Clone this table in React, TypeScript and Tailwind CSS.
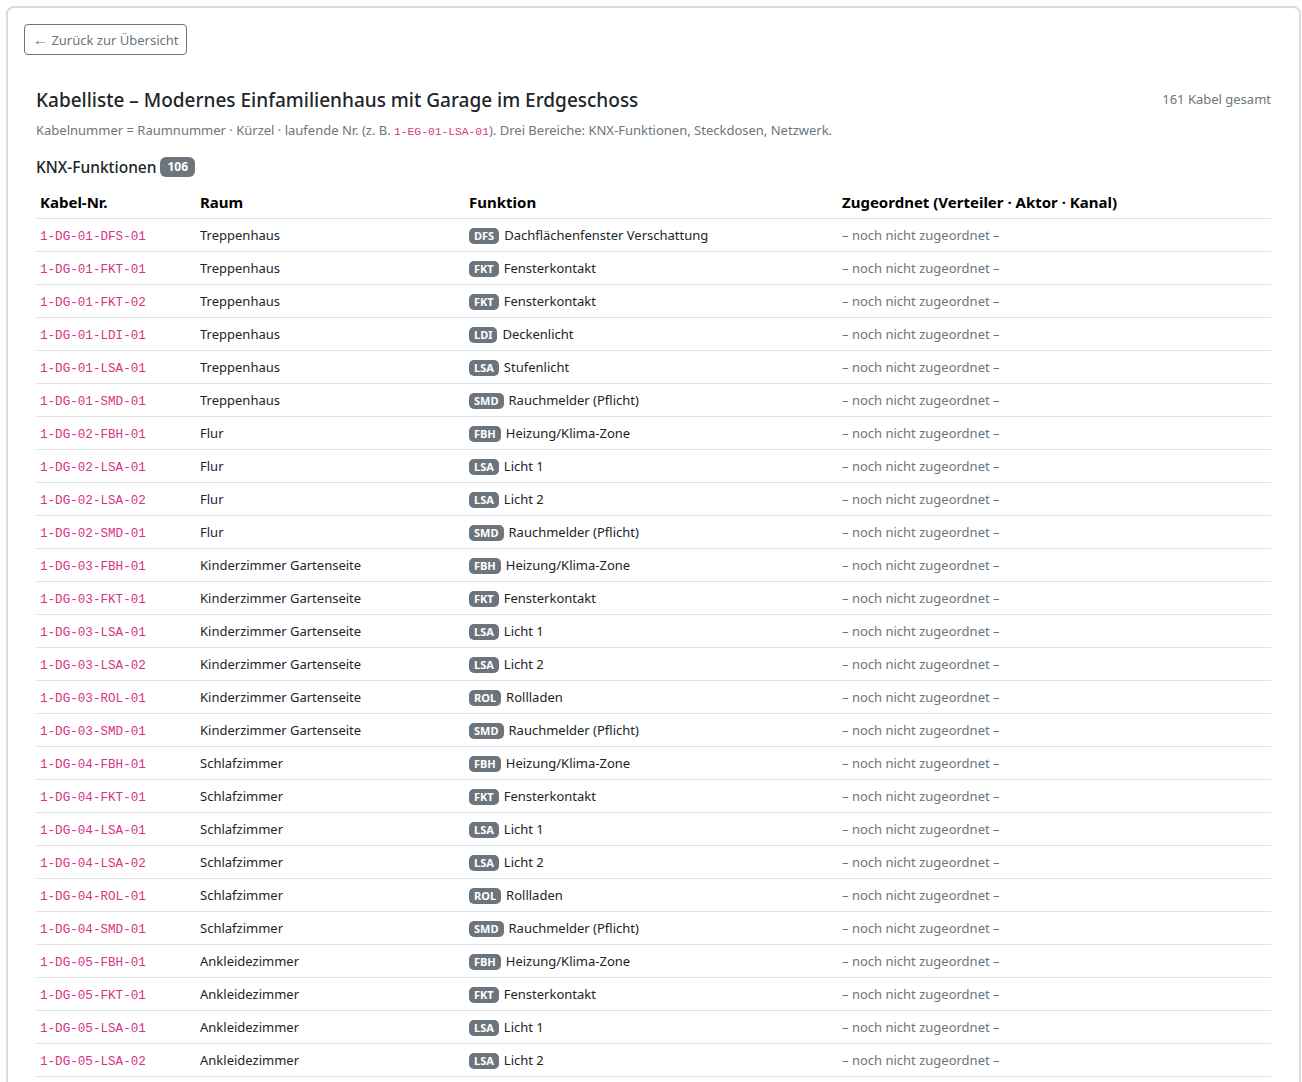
import React from "react";

type Row = { nr: string; raum: string; code: string; funktion: string };

const rows: Row[] = [
  { nr: "1-DG-01-DFS-01", raum: "Treppenhaus", code: "DFS", funktion: "Dachflächenfenster Verschattung" },
  { nr: "1-DG-01-FKT-01", raum: "Treppenhaus", code: "FKT", funktion: "Fensterkontakt" },
  { nr: "1-DG-01-FKT-02", raum: "Treppenhaus", code: "FKT", funktion: "Fensterkontakt" },
  { nr: "1-DG-01-LDI-01", raum: "Treppenhaus", code: "LDI", funktion: "Deckenlicht" },
  { nr: "1-DG-01-LSA-01", raum: "Treppenhaus", code: "LSA", funktion: "Stufenlicht" },
  { nr: "1-DG-01-SMD-01", raum: "Treppenhaus", code: "SMD", funktion: "Rauchmelder (Pflicht)" },
  { nr: "1-DG-02-FBH-01", raum: "Flur", code: "FBH", funktion: "Heizung/Klima-Zone" },
  { nr: "1-DG-02-LSA-01", raum: "Flur", code: "LSA", funktion: "Licht 1" },
  { nr: "1-DG-02-LSA-02", raum: "Flur", code: "LSA", funktion: "Licht 2" },
  { nr: "1-DG-02-SMD-01", raum: "Flur", code: "SMD", funktion: "Rauchmelder (Pflicht)" },
  { nr: "1-DG-03-FBH-01", raum: "Kinderzimmer Gartenseite", code: "FBH", funktion: "Heizung/Klima-Zone" },
  { nr: "1-DG-03-FKT-01", raum: "Kinderzimmer Gartenseite", code: "FKT", funktion: "Fensterkontakt" },
  { nr: "1-DG-03-LSA-01", raum: "Kinderzimmer Gartenseite", code: "LSA", funktion: "Licht 1" },
  { nr: "1-DG-03-LSA-02", raum: "Kinderzimmer Gartenseite", code: "LSA", funktion: "Licht 2" },
  { nr: "1-DG-03-ROL-01", raum: "Kinderzimmer Gartenseite", code: "ROL", funktion: "Rollladen" },
  { nr: "1-DG-03-SMD-01", raum: "Kinderzimmer Gartenseite", code: "SMD", funktion: "Rauchmelder (Pflicht)" },
  { nr: "1-DG-04-FBH-01", raum: "Schlafzimmer", code: "FBH", funktion: "Heizung/Klima-Zone" },
  { nr: "1-DG-04-FKT-01", raum: "Schlafzimmer", code: "FKT", funktion: "Fensterkontakt" },
  { nr: "1-DG-04-LSA-01", raum: "Schlafzimmer", code: "LSA", funktion: "Licht 1" },
  { nr: "1-DG-04-LSA-02", raum: "Schlafzimmer", code: "LSA", funktion: "Licht 2" },
  { nr: "1-DG-04-ROL-01", raum: "Schlafzimmer", code: "ROL", funktion: "Rollladen" },
  { nr: "1-DG-04-SMD-01", raum: "Schlafzimmer", code: "SMD", funktion: "Rauchmelder (Pflicht)" },
  { nr: "1-DG-05-FBH-01", raum: "Ankleidezimmer", code: "FBH", funktion: "Heizung/Klima-Zone" },
  { nr: "1-DG-05-FKT-01", raum: "Ankleidezimmer", code: "FKT", funktion: "Fensterkontakt" },
  { nr: "1-DG-05-LSA-01", raum: "Ankleidezimmer", code: "LSA", funktion: "Licht 1" },
  { nr: "1-DG-05-LSA-02", raum: "Ankleidezimmer", code: "LSA", funktion: "Licht 2" },
];

const mono = "font-['Liberation_Mono','DejaVu_Sans_Mono',monospace] text-[#d63384]";
const th = "px-1 py-1 text-[15px] font-bold leading-6 text-black";
const td = "h-[33px] px-1 pt-[2px] pb-0";

export default function App() {
  return (
    <div className="min-h-screen bg-white pt-[6px] pl-[6px] pr-px font-['Noto_Sans',sans-serif] text-[#212529]">
      <div className="rounded-lg border-2 border-[#dcdcdc] p-4 pb-4">
        <button className="h-[31px] rounded border border-[#6c757d] px-2 text-[13px] text-[#6c757d]">
          <span className="text-[15px]">←</span> Zurück zur Übersicht
        </button>

        <div className="px-3 pt-[31px]">
          <div className="flex items-center justify-between">
            <h1 className="text-[19px] font-medium leading-7">
              Kabelliste – Modernes Einfamilienhaus mit Garage im Erdgeschoss
            </h1>
            <span className="text-[13px] text-[#6c757d]">161 Kabel gesamt</span>
          </div>
          <p className="mt-[6px] text-[13px] leading-5 text-[#6c757d]">
            Kabelnummer = Raumnummer · Kürzel · laufende Nr. (z. B.{" "}
            <code className={`${mono} text-[11.3px]`}>1-EG-01-LSA-01</code>). Drei Bereiche: KNX-Funktionen, Steckdosen, Netzwerk.
          </p>

          <h2 className="mt-[13px] flex items-center gap-1 text-[15.5px] font-medium leading-6">
            KNX-Funktionen
            <span className="rounded-md bg-[#6c757d] px-[7px] py-[2px] text-[12px] font-bold leading-4 text-white">106</span>
          </h2>

          <table className="mt-[7px] w-full table-fixed border-collapse text-left text-[13px]">
            <thead>
              <tr className="border-b border-[#dee2e6]">
                <th className={`w-[160px] ${th}`}>Kabel-Nr.</th>
                <th className={`w-[269px] ${th}`}>Raum</th>
                <th className={`w-[373px] ${th}`}>Funktion</th>
                <th className={th}>Zugeordnet (Verteiler · Aktor · Kanal)</th>
              </tr>
            </thead>
            <tbody>
              {rows.map((r) => (
                <tr key={r.nr} className="border-b border-[#dee2e6]">
                  <td className={td}>
                    <code className={`${mono} text-[12.6px]`}>{r.nr}</code>
                  </td>
                  <td className={td}>{r.raum}</td>
                  <td className={td}>
                    <div className="flex items-center gap-[5px]">
                      <span className="rounded-[5px] bg-[#6c757d] px-[5px] text-[11px] font-bold leading-[16px] text-white">
                        {r.code}
                      </span>
                      <span>{r.funktion}</span>
                    </div>
                  </td>
                  <td className={`${td} text-[#6c757d]`}>– noch nicht zugeordnet –</td>
                </tr>
              ))}
            </tbody>
          </table>
        </div>
      </div>
    </div>
  );
}
